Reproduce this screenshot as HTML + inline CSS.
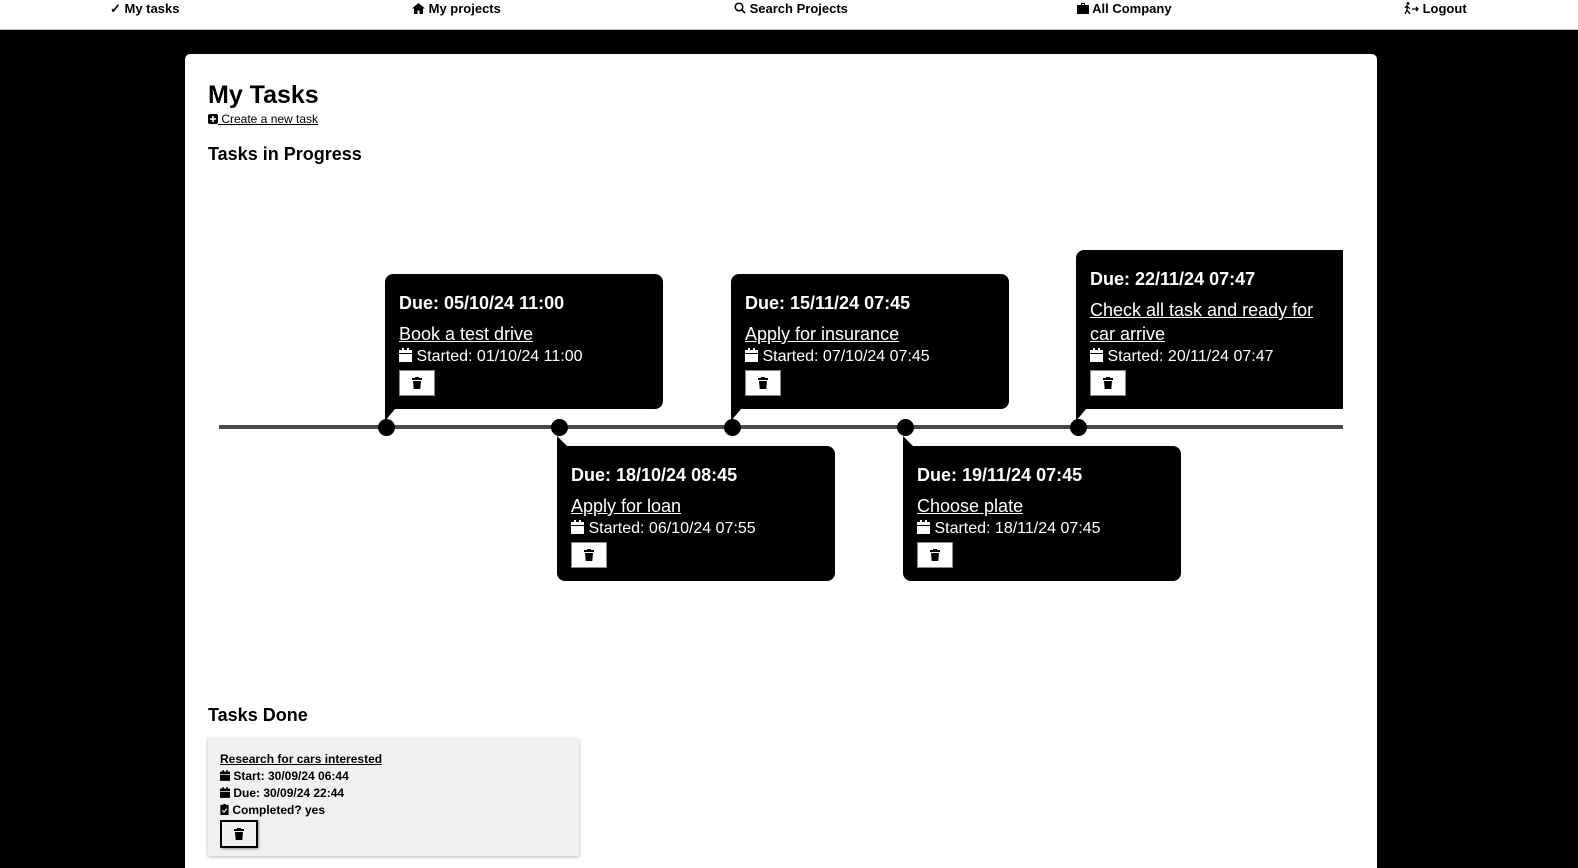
<!DOCTYPE html>
<html><head><meta charset="utf-8"><style>
*{margin:0;padding:0;box-sizing:border-box}
html,body{width:1578px;height:868px;overflow:hidden}
body{background:#000;font-family:"Liberation Sans",sans-serif;position:relative}
.nav{position:absolute;left:0;top:0;width:1578px;height:30px;background:#fff;border-bottom:1px solid #bbb}
.nav span{position:absolute;top:1px;font-weight:bold;font-size:13px;color:#000;white-space:nowrap}
.card{position:absolute;left:185px;top:54px;width:1192px;height:814px;background:#fff;border-radius:5px 5px 0 0}
h1{position:absolute;left:208px;top:81px;font-size:25px;font-weight:bold}
.create{position:absolute;left:208px;top:112px;font-size:12px;text-decoration:underline}
h2{position:absolute;font-size:18px;font-weight:bold}
.line{position:absolute;left:219px;top:425px;width:1124px;height:4px;background:#4a4a4a}
.dot{position:absolute;top:419px;width:17px;height:17px;border-radius:50%;background:#000}
.box{position:absolute;width:278px;height:135px;background:#000;color:#fff;border-radius:8px;padding:18px 14px}
.box .due{font-weight:bold;font-size:18px;line-height:22px}
.box .t{font-size:18px;text-decoration:underline;margin-top:8px;line-height:24px}
.box .s{font-size:16px;line-height:21px}
.btn{width:36px;height:26px;background:#fff;border:1px solid #888;margin-top:3px;display:flex;align-items:center;justify-content:center}
.up{border-bottom-left-radius:0}
.up:after{content:"";position:absolute;left:0;bottom:-12px;border-left:10px solid #000;border-bottom:12px solid transparent}
.dn{border-top-left-radius:0}
.dn:after{content:"";position:absolute;left:0;top:-10px;border-left:10px solid #000;border-top:10px solid transparent}
.done{position:absolute;left:208px;top:738px;width:371px;height:118px;background:#f1f1f1;box-shadow:0 1px 3px rgba(0,0,0,.3);padding:13px 12px;font-size:12px;font-weight:bold;line-height:17px}
svg{vertical-align:-1px}
</style></head><body>
<div class="nav">
<span style="left:110px">✓ My tasks</span>
<span style="left:412px"><svg width="13" height="11" viewBox="0 0 13 11"><path d="M6.5 0L0 5.5h2V11h3.5V7.5h2V11H11V5.5h2z"/></svg> My projects</span>
<span style="left:734px"><svg width="12" height="12" viewBox="0 0 12 12"><circle cx="5" cy="5" r="3.8" fill="none" stroke="#000" stroke-width="1.5"/><path d="M8 8l3 3" stroke="#000" stroke-width="1.6"/></svg> Search Projects</span>
<span style="left:1077px"><svg width="12" height="11" viewBox="0 0 12 11"><path d="M4 0h4v2h4v9H0V2h4zM5 1v1h2V1zM0 5h12v1H0z"/></svg> All Company</span>
<span style="left:1403px"><svg width="16" height="12" viewBox="0 0 16 12"><circle cx="5" cy="1.5" r="1.5"/><path d="M4 3.5L2 6M4.5 3.5L4 8l-2 4M4 8l3 4M4.5 5L7 6.5M9 7h6M13 5l2 2-2 2" stroke="#000" stroke-width="1.3" fill="none"/></svg> Logout</span>
</div>
<div class="card"></div>
<h1>My Tasks</h1>
<div class="create"><svg width="10" height="10" viewBox="0 0 10 10"><rect width="10" height="10" rx="2"/><path d="M5 2v6M2 5h6" stroke="#fff" stroke-width="1.6"/></svg> Create a new task</div>
<h2 style="left:208px;top:144px">Tasks in Progress</h2>
<div class="line"></div>
<div class="dot" style="left:378px"></div>
<div class="dot" style="left:551px"></div>
<div class="dot" style="left:724px"></div>
<div class="dot" style="left:897px"></div>
<div class="dot" style="left:1070px"></div>

<div class="box up" style="left:385px;top:274px"><div class="due">Due: 05/10/24 11:00</div><div class="t">Book a test drive</div><div class="s"><svg width="13" height="14" viewBox="0 0 13 14" fill="#fff"><path d="M3 0h2v2h3V0h2v2h3v3H0V2h3zM0 6h13v8H0z"/></svg> Started: 01/10/24 11:00</div><div class="btn"><svg width="10" height="12" viewBox="0 0 10 12"><path d="M3 0h4v1h3v2H0V1h3zM1 4h8l-.7 8H1.7z"/></svg></div></div>
<div class="box up" style="left:731px;top:274px"><div class="due">Due: 15/11/24 07:45</div><div class="t">Apply for insurance</div><div class="s"><svg width="13" height="14" viewBox="0 0 13 14" fill="#fff"><path d="M3 0h2v2h3V0h2v2h3v3H0V2h3zM0 6h13v8H0z"/></svg> Started: 07/10/24 07:45</div><div class="btn"><svg width="10" height="12" viewBox="0 0 10 12"><path d="M3 0h4v1h3v2H0V1h3zM1 4h8l-.7 8H1.7z"/></svg></div></div>
<div class="box up" style="left:1076px;top:250px;width:267px;height:159px;border-radius:8px 0 0 0"><div class="due">Due: 22/11/24 07:47</div><div class="t">Check all task and ready for car arrive</div><div class="s"><svg width="13" height="14" viewBox="0 0 13 14" fill="#fff"><path d="M3 0h2v2h3V0h2v2h3v3H0V2h3zM0 6h13v8H0z"/></svg> Started: 20/11/24 07:47</div><div class="btn"><svg width="10" height="12" viewBox="0 0 10 12"><path d="M3 0h4v1h3v2H0V1h3zM1 4h8l-.7 8H1.7z"/></svg></div></div>
<div class="box dn" style="left:557px;top:446px"><div class="due">Due: 18/10/24 08:45</div><div class="t">Apply for loan</div><div class="s"><svg width="13" height="14" viewBox="0 0 13 14" fill="#fff"><path d="M3 0h2v2h3V0h2v2h3v3H0V2h3zM0 6h13v8H0z"/></svg> Started: 06/10/24 07:55</div><div class="btn"><svg width="10" height="12" viewBox="0 0 10 12"><path d="M3 0h4v1h3v2H0V1h3zM1 4h8l-.7 8H1.7z"/></svg></div></div>
<div class="box dn" style="left:903px;top:446px"><div class="due">Due: 19/11/24 07:45</div><div class="t">Choose plate</div><div class="s"><svg width="13" height="14" viewBox="0 0 13 14" fill="#fff"><path d="M3 0h2v2h3V0h2v2h3v3H0V2h3zM0 6h13v8H0z"/></svg> Started: 18/11/24 07:45</div><div class="btn"><svg width="10" height="12" viewBox="0 0 10 12"><path d="M3 0h4v1h3v2H0V1h3zM1 4h8l-.7 8H1.7z"/></svg></div></div>

<h2 style="left:208px;top:705px">Tasks Done</h2>
<div class="done">
<div style="text-decoration:underline">Research for cars interested</div>
<div><svg width="10" height="11" viewBox="0 0 13 14"><path d="M3 0h2v2h3V0h2v2h3v3H0V2h3zM0 6h13v8H0z"/></svg> Start: 30/09/24 06:44</div>
<div><svg width="10" height="11" viewBox="0 0 13 14"><path d="M3 0h2v2h3V0h2v2h3v3H0V2h3zM0 6h13v8H0z"/></svg> Due: 30/09/24 22:44</div>
<div><svg width="9" height="11" viewBox="0 0 9 12"><path d="M3 0h3v1h3v11H0V1h3z"/><path d="M2 7l2 2 3-4" stroke="#f1f1f1" stroke-width="1.3" fill="none"/></svg> Completed? yes</div>
<div style="width:38px;height:28px;border:2px solid #000;margin-top:1px;display:flex;align-items:center;justify-content:center;box-shadow:1px 1px 2px rgba(0,0,0,.4)"><svg width="10" height="12" viewBox="0 0 10 12"><path d="M3 0h4v1h3v2H0V1h3zM1 4h8l-.7 8H1.7z"/></svg></div>
</div>
</body></html>
